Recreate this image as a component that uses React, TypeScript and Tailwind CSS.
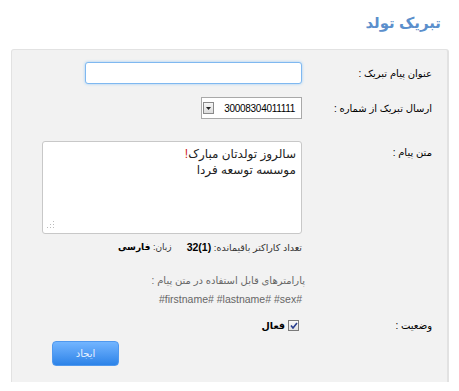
import React from "react";

const font = { fontFamily: '"Liberation Sans", "DejaVu Sans", Tahoma, sans-serif' };

function Label({ children }: { children: React.ReactNode }) {
  return <div className="w-[130px] shrink-0 text-[10px] text-black">{children}</div>;
}

export default function App() {
  return (
    <div dir="rtl" className="w-[459px] h-[391px] bg-white relative" style={font}>
      <div className="h-[49px] pr-[18px] pt-[11px]">
        <h1 className="text-[15px] font-bold text-[#5b8fcc] leading-[24px]">تبریک تولد</h1>
      </div>
      <div className="mr-[10px] ml-[11px] h-[333px] bg-[#f2f2f2] border-t border-l border-r-2 border-[#e2e2e2] rounded-t-[3px] pr-[15px] pt-[12px]">
        {/* row 1 */}
        <div className="flex items-center h-[22px]">
          <Label>عنوان پیام تبریک :</Label>
          <input className="w-[217px] h-[22px] bg-white border border-[#7fb8f0] rounded-[3px] shadow-[0_0_3px_#9ccdf8] outline-none" />
        </div>
        {/* row 2 */}
        <div className="flex items-center h-[22px] mt-[13px]">
          <Label>ارسال تبریک از شماره :</Label>
          <div className="w-[101px] h-[22px] bg-white border border-[#a9a9a9] flex items-center justify-between pr-[6px] pl-[1px]">
            <span className="text-[10px] text-black tracking-[-0.3px]" dir="ltr">30008304011111</span>
            <span className="w-[11px] h-[12px] border border-[#8a8a8a] bg-gradient-to-b from-[#f6f6f6] to-[#dcdcdc] flex items-center justify-center">
              <svg width="5" height="3" viewBox="0 0 5 3"><path d="M0 0h5L2.5 3z" fill="#222" /></svg>
            </span>
          </div>
        </div>
        {/* row 3 */}
        <div className="flex items-start mt-[22px]">
          <div className="w-[130px] shrink-0 text-[10px] text-black pt-[4px]">متن پیام :</div>
          <div className="w-[260px] h-[93px] bg-white border border-[#c8c8c8] rounded-[3px] relative pr-[5px] pt-[4px] text-[12px] leading-[16px] text-[#222]">
            <div>سالروز تولدتان مبارک<span className="text-[#d02020]">!</span></div>
            <div>موسسه توسعه فردا</div>
            <svg className="absolute left-[4px] bottom-[4px]" width="8" height="8" viewBox="0 0 8 8">
              <g fill="#bbb">
                <rect x="6" y="0" width="1" height="1" />
                <rect x="3" y="3" width="1" height="1" />
                <rect x="6" y="3" width="1" height="1" />
                <rect x="0" y="6" width="1" height="1" />
                <rect x="3" y="6" width="1" height="1" />
                <rect x="6" y="6" width="1" height="1" />
              </g>
            </svg>
          </div>
        </div>
        <div className="mr-[130px] mt-[6px] flex items-center gap-[15px] text-[9.5px] text-[#333]">
          <span>
            تعداد کاراکتر باقیمانده: <span dir="ltr" className="text-[10.5px] text-black font-bold">32(1)</span>
          </span>
          <span className="text-[9px]">
            زبان: <span className="text-black font-bold">فارسی</span>
          </span>
        </div>
        <div className="mr-[127px] mt-[16px] text-[10px] text-[#666] leading-[18px]">
          <div>پارامترهای قابل استفاده در متن پیام :</div>
          <div className="mr-[3px] text-[10.5px]">#firstname# #lastname# #sex#</div>
        </div>
        {/* status */}
        <div className="flex items-center mt-[11px] h-[14px]">
          <Label>وضعیت :</Label>
          <div className="flex items-center gap-[3px] mr-[3px]">
            <span className="w-[11px] h-[11px] border border-[#7a7a7a] bg-gradient-to-b from-[#fafafa] to-[#e2e2e2] flex items-center justify-center">
              <svg width="8" height="7" viewBox="0 0 8 7"><path d="M1 3.5l2 2.5L7 1" stroke="#2a3f8f" strokeWidth="1.6" fill="none" /></svg>
            </span>
            <span className="text-[9.5px] font-bold text-black">فعال</span>
          </div>
        </div>
        <div className="flex justify-end mt-[8px] ml-[40px]">
          <button className="w-[67px] h-[25px] rounded-[4px] border border-[#4f98ee] bg-gradient-to-b from-[#72b5ff] to-[#2b83e8] text-[10px] text-[#e8f2ff]" style={font}>
            ایجاد
          </button>
        </div>
      </div>
    </div>
  );
}
